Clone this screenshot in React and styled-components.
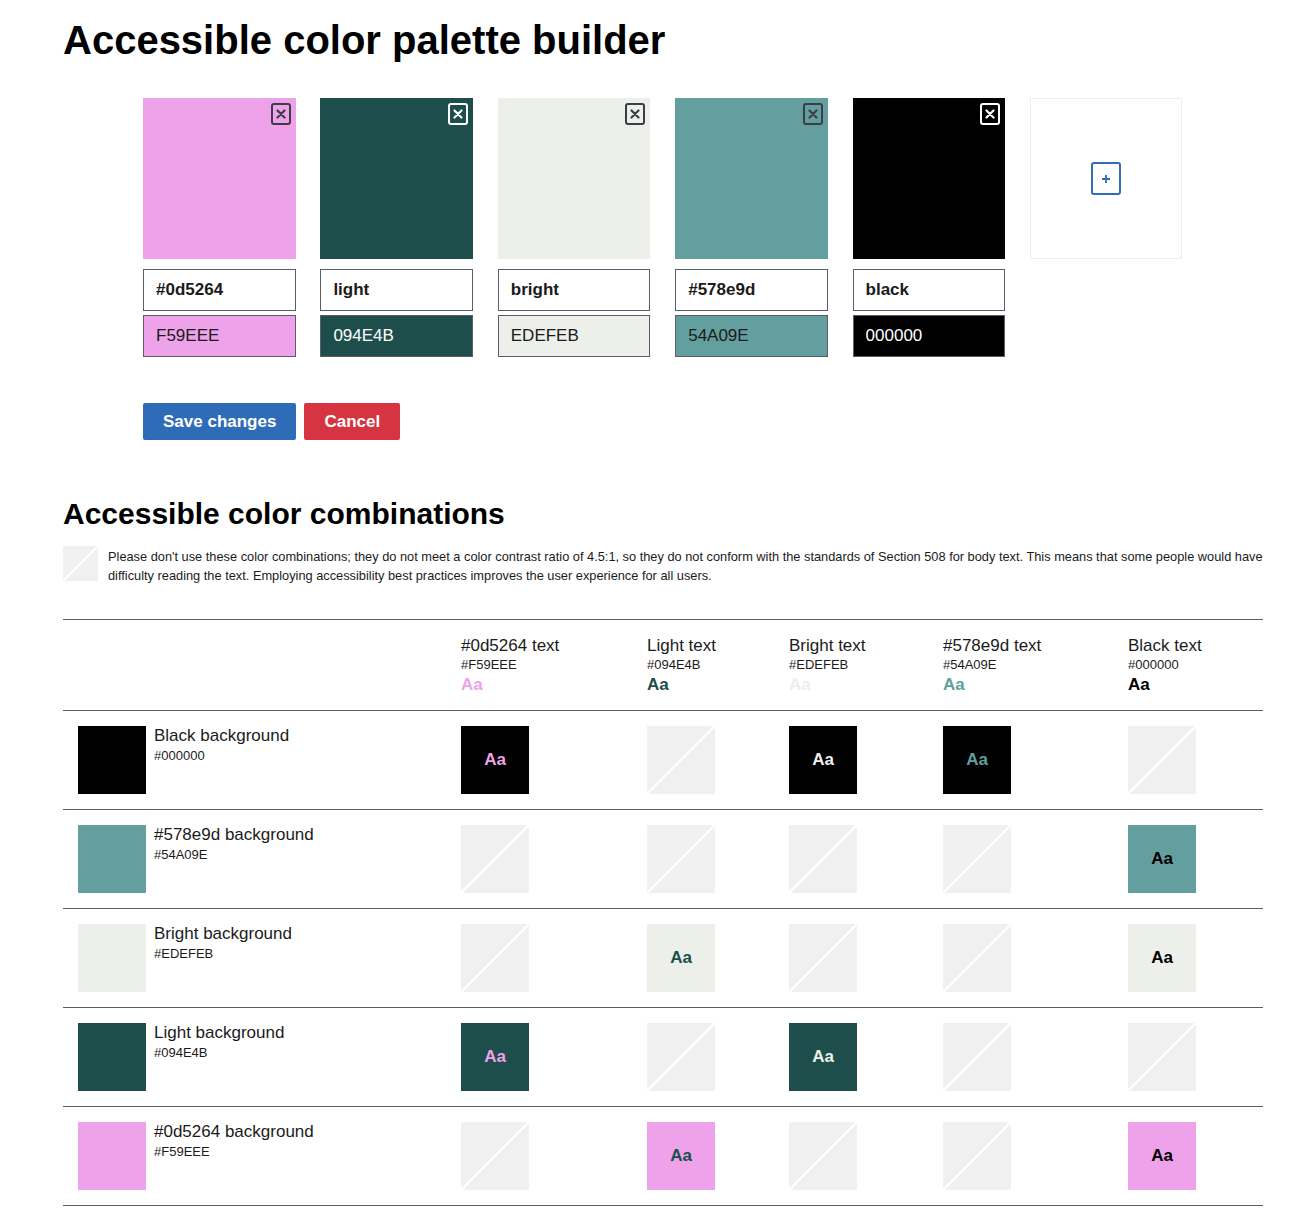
import React from 'react';
import styled, { createGlobalStyle } from 'styled-components';

const GlobalStyle = createGlobalStyle`
  body {
    margin: 0;
    background: #fff;
    color: #1b1b1b;
    font-family: "Liberation Sans", Arial, sans-serif;
  }
`;

const palette = [
  { name: '#0d5264', hex: 'F59EEE', swatch: '#eda2ea', dark: false, label: '#0d5264' },
  { name: 'light', hex: '094E4B', swatch: '#1d4e4b', dark: true, label: 'Light' },
  { name: 'bright', hex: 'EDEFEB', swatch: '#edefeb', dark: false, label: 'Bright' },
  { name: '#578e9d', hex: '54A09E', swatch: '#629f9e', dark: false, label: '#578e9d' },
  { name: 'black', hex: '000000', swatch: '#000000', dark: true, label: 'Black' },
];

// row order as in the table, each with the text colours that pass
const rows = [
  { idx: 4, pass: [0, 2, 3] },
  { idx: 3, pass: [4] },
  { idx: 2, pass: [1, 4] },
  { idx: 1, pass: [0, 2] },
  { idx: 0, pass: [1, 4] },
];

const Page = styled.div`
  padding: 0 0 40px 63px;
`;

const Title = styled.h1`
  margin: 0;
  padding-top: 17px;
  font-size: 40px;
  line-height: 46px;
  font-weight: 700;
  color: #000;
`;

const Palette = styled.div`
  display: flex;
  gap: 24.9px;
  margin: 35px 0 0 80px;
`;

const Card = styled.div`
  width: 152.5px;
  display: flex;
  flex-direction: column;
`;

const Swatch = styled.div`
  position: relative;
  height: 161px;
  background: ${p => p.$bg};
  margin-bottom: 10px;
`;

const CloseBtn = styled.button`
  position: absolute;
  top: 5px;
  right: 5px;
  width: 20px;
  height: 22px;
  padding: 0;
  border: 2px solid ${p => (p.$light ? '#fff' : '#3d3d4a')};
  border-radius: 3px;
  background: transparent;
  display: flex;
  align-items: center;
  justify-content: center;
  cursor: pointer;
`;

const Field = styled.input`
  box-sizing: border-box;
  width: 100%;
  height: 42px;
  margin: 0 0 4px;
  padding: 0 12px;
  border: 1px solid #5c5c6a;
  border-radius: 0;
  background: ${p => p.$bg || '#fff'};
  color: ${p => p.$color || '#1b1b1b'};
  font-family: "Liberation Sans", Arial, sans-serif;
  font-size: 17px;
  font-weight: ${p => (p.$bold ? 700 : 400)};
  outline: none;
`;

const AddCard = styled.div`
  box-sizing: border-box;
  width: 100%;
  height: 161px;
  border: 1px solid #eeeeee;
  display: flex;
  align-items: center;
  justify-content: center;
`;

const AddBtn = styled.button`
  width: 30px;
  height: 33px;
  padding: 0;
  border: 2px solid #2f6db5;
  border-radius: 3px;
  background: #fff;
  display: flex;
  align-items: center;
  justify-content: center;
  cursor: pointer;
`;

const Actions = styled.div`
  display: flex;
  gap: 8px;
  margin: 42px 0 0 80px;
`;

const Button = styled.button`
  height: 37px;
  padding: 0 20px;
  border: 0;
  border-radius: 2px;
  background: ${p => p.$bg};
  color: #fff;
  font-family: "Liberation Sans", Arial, sans-serif;
  font-size: 17px;
  font-weight: 700;
  cursor: pointer;
`;

const Subtitle = styled.h2`
  margin: 57px 0 0;
  font-size: 30px;
  line-height: 34px;
  font-weight: 700;
  color: #000;
`;

const Legend = styled.div`
  display: flex;
  gap: 10px;
  margin-top: 15px;
  width: 1200px;
  font-size: 12.8px;
  line-height: 19px;
  color: #1b1b1b;
`;

const LegendText = styled.p`
  margin: 0;
  padding-top: 1px;
`;

const Fail = styled.div`
  flex: none;
  width: ${p => p.$size}px;
  height: ${p => p.$size}px;
  background: linear-gradient(
    to bottom right,
    #f0f0f0 calc(50% - 1.5px),
    #ffffff calc(50% - 1px),
    #ffffff calc(50% + 1px),
    #f0f0f0 calc(50% + 1.5px)
  );
`;

const Table = styled.div`
  width: 1200px;
  margin-top: 34px;
  border-top: 1px solid #5c5c6a;
`;

const Row = styled.div`
  display: grid;
  grid-template-columns: 383px 186px 142px 154px 185px 150px;
  border-bottom: 1px solid #5c5c6a;
  height: ${p => (p.$head ? 90 : 98)}px;
`;

const HeadCell = styled.div`
  padding: 15px 15px 0;
`;

const HeadName = styled.div`
  font-size: 17px;
  line-height: 21px;
`;

const Hex = styled.div`
  font-size: 13px;
  line-height: 18px;
  margin-top: ${p => p.$mt || 0}px;
`;

const Sample = styled.div`
  font-size: 17px;
  line-height: 21px;
  font-weight: 700;
  color: ${p => p.$color};
`;

const LabelCell = styled.div`
  display: flex;
  gap: 8px;
  padding: 15px 15px 0;
`;

const Chip = styled.div`
  width: 68px;
  height: 68px;
  background: ${p => p.$bg};
`;

const LabelText = styled.div`
  margin-top: -1px;
`;

const Cell = styled.div`
  padding: 15px 15px 0;
`;

const Combo = styled.div`
  width: 68px;
  height: 68px;
  background: ${p => p.$bg};
  color: ${p => p.$color};
  display: flex;
  align-items: center;
  justify-content: center;
  font-size: 17px;
  font-weight: 700;
`;

const XIcon = ({ color }) => (
  <svg width="10" height="10" viewBox="0 0 10 10">
    <path d="M1.5 1.5 L8.5 8.5 M8.5 1.5 L1.5 8.5" stroke={color} strokeWidth="2.2" strokeLinecap="round" />
  </svg>
);

const PlusIcon = () => (
  <svg width="10" height="10" viewBox="0 0 10 10">
    <path d="M5 1 V9 M1 5 H9" stroke="#2f6db5" strokeWidth="1.8" />
  </svg>
);

export default function App() {
  return (
    <Page>
      <GlobalStyle />
      <Title>Accessible color palette builder</Title>

      <Palette>
        {palette.map(c => (
          <Card key={c.hex}>
            <Swatch $bg={c.swatch}>
              <CloseBtn $light={c.dark} aria-label="Remove color">
                <XIcon color={c.dark ? '#fff' : '#3d3d4a'} />
              </CloseBtn>
            </Swatch>
            <Field $bold defaultValue={c.name} />
            <Field
              defaultValue={c.hex}
              $bg={c.swatch}
              $color={c.dark ? '#fff' : '#1b1b1b'}
            />
          </Card>
        ))}
        <Card>
          <AddCard>
            <AddBtn aria-label="Add color">
              <PlusIcon />
            </AddBtn>
          </AddCard>
        </Card>
      </Palette>

      <Actions>
        <Button $bg="#2f6cb8">Save changes</Button>
        <Button $bg="#d63441">Cancel</Button>
      </Actions>

      <Subtitle>Accessible color combinations</Subtitle>
      <Legend>
        <Fail $size={35} />
        <LegendText>
          Please don't use these color combinations; they do not meet a color contrast ratio of 4.5:1, so they do not conform with the standards of Section 508 for body text. This means that some people would have difficulty reading the text. Employing accessibility best practices improves the user experience for all users.
        </LegendText>
      </Legend>

      <Table>
        <Row $head>
          <HeadCell />
          {palette.map(c => (
            <HeadCell key={c.hex}>
              <HeadName>{c.label} text</HeadName>
              <Hex>#{c.hex}</Hex>
              <Sample $color={c.swatch}>Aa</Sample>
            </HeadCell>
          ))}
        </Row>
        {rows.map(r => {
          const bg = palette[r.idx];
          return (
            <Row key={bg.hex}>
              <LabelCell>
                <Chip $bg={bg.swatch} />
                <LabelText>
                  <HeadName>{bg.label} background</HeadName>
                  <Hex $mt={1}>#{bg.hex}</Hex>
                </LabelText>
              </LabelCell>
              {palette.map((fg, i) => (
                <Cell key={fg.hex}>
                  {r.pass.includes(i) ? (
                    <Combo $bg={bg.swatch} $color={fg.swatch}>Aa</Combo>
                  ) : (
                    <Fail $size={68} />
                  )}
                </Cell>
              ))}
            </Row>
          );
        })}
      </Table>
    </Page>
  );
}
